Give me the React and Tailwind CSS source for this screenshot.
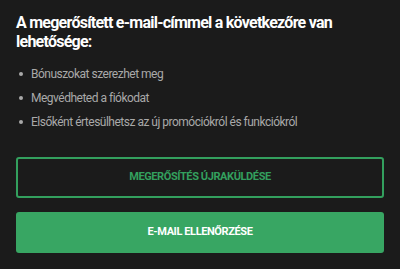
import React from 'react';

const perks = [
  'Bónuszokat szerezhet meg',
  'Megvédheted a fiókodat',
  'Elsőként értesülhetsz az új promóciókról és funkciókról',
];

const App = () => {
  return (
    <div className="w-[400px] h-[269px] bg-[#1b1b1b] px-4 pt-[13px] font-['Roboto',sans-serif]">
      {/* Heading */}
      <h2 className="text-[16px] leading-[19px] font-bold tracking-[-0.75px] text-white">
        A megerősített e-mail-címmel a következőre van lehetősége:
      </h2>

      {/* Perks list */}
      <ul className="mt-[11px] flex flex-col">
        {perks.map(p => (
          <li key={p} className="flex items-center text-[12px] leading-[24px] tracking-[-0.5px] text-[#a9a9a9]">
            <span className="w-[4px] h-[4px] rounded-full bg-[#a9a9a9] ml-[3px] mr-[8px]" />
            {p}
          </li>
        ))}
      </ul>

      {/* Actions */}
      <div className="mt-[23px] flex flex-col gap-[14px]">
        <button className="h-[41px] w-full rounded-[3px] border-2 border-[#33a05e] text-[#33a05e] text-[11px] font-bold uppercase tracking-[-0.4px]">
          Megerősítés újraküldése
        </button>
        <button className="h-[41px] w-full rounded-[3px] bg-[#38a663] text-white text-[11px] font-bold uppercase tracking-[-0.4px]">
          E-mail ellenőrzése
        </button>
      </div>
    </div>
  );
};

export default App;
